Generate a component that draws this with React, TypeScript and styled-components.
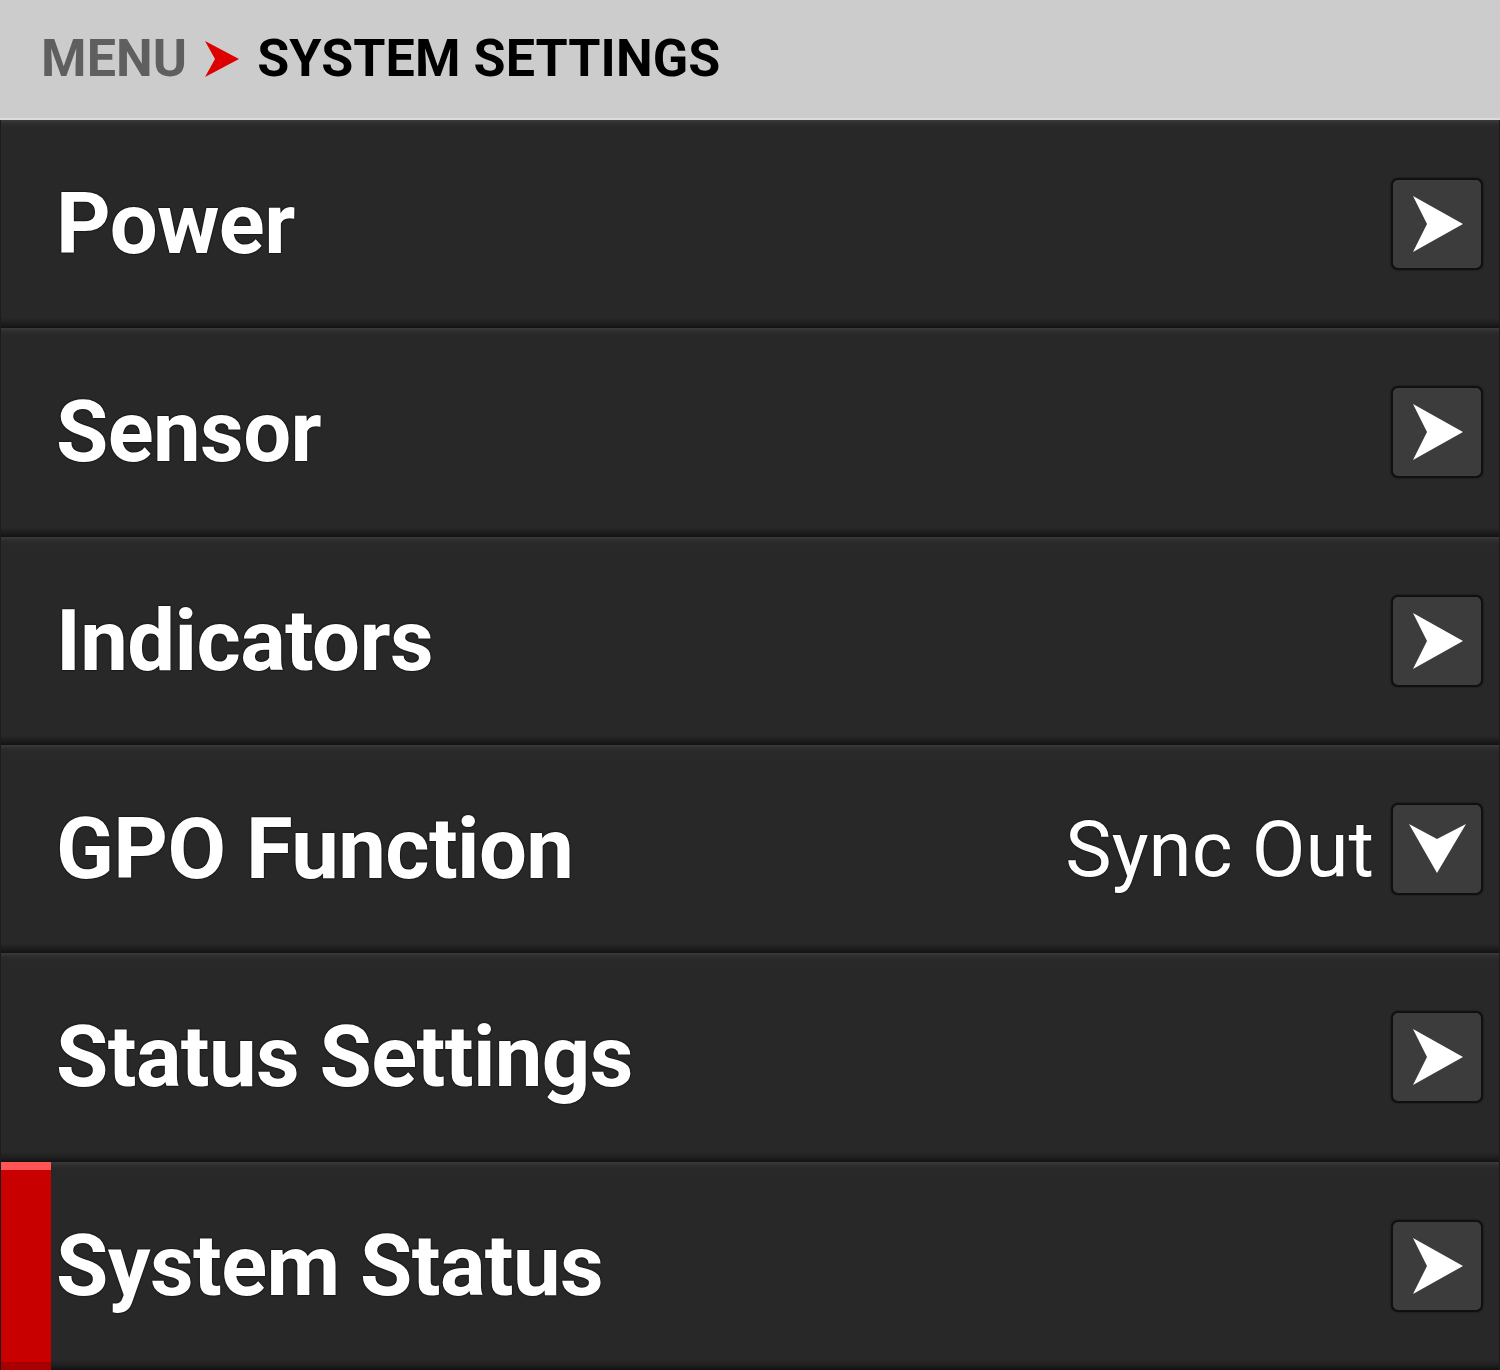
import React, {FC} from 'react'
import styled, {createGlobalStyle} from 'styled-components'

const GlobalStyle = createGlobalStyle`
    html, body {
        margin: 0;
        padding: 0;
        background: #282828;
    }
    body {
        font-family: Roboto, "Liberation Sans", Arial, sans-serif;
    }
`;

const Screen = styled.div`
    display: flex;
    flex-direction: column;
    width: 1500px;
    height: 1370px;
    overflow: hidden;
    background: #1c1c1c;
`;

const Header = styled.div`
    display: flex;
    flex-direction: row;
    align-items: center;
    gap: 18px;
    height: 118px;
    padding-left: 41px;
    background: #cccccc;
    border-bottom: 2px solid #dcdcdc;
    box-sizing: content-box;
`;

const Crumb = styled.span<{ $current?: boolean }>`
    font-size: 52px;
    font-weight: 700;
    line-height: 1;
    letter-spacing: 0.1px;
    color: ${p => p.$current ? '#000000' : '#5f5f5f'};
`;

const MenuList = styled.div`
    display: flex;
    flex-direction: column;
    flex: 1;
`;

const Row = styled.div`
    position: relative;
    flex: 1;
    display: flex;
    flex-direction: row;
    align-items: center;
    padding: 0 16px 0 55px;
    margin: 0 1px;
    background: linear-gradient(to bottom, #3a3a3a 0px, #2c2c2c 4px, #282828 8px, #282828 calc(100% - 10px), #1f1f1f calc(100% - 5px), #121212 100%);
`;

const SelectBar = styled.div`
    position: absolute;
    left: 0;
    top: 0;
    bottom: 0;
    width: 50px;
    background: linear-gradient(to bottom, #ff5555 0px, #ff5555 8px, #c80000 8px, #c80000 calc(100% - 8px), #a80000 calc(100% - 8px));
`;

const Label = styled.span`
    flex: 1;
    position: relative;
    font-size: 85px;
    font-weight: 700;
    color: #ffffff;
    letter-spacing: -0.6px;
    text-shadow: 0 0 2px #000, 0 0 1px #000;
`;

const Value = styled.span`
    font-size: 78px;
    font-weight: 400;
    color: #ffffff;
    margin-right: 17px;
    text-shadow: 0 0 2px #000;
`;

const ArrowButton = styled.div`
    width: 88px;
    height: 88px;
    border: 2px solid #101010;
    border-radius: 7px;
    background: #3c3c3c;
    box-shadow: 0 0 2px rgba(0,0,0,0.6);
    display: flex;
    align-items: center;
    justify-content: center;
`;

type MenuItem = {
    label: string
    value?: string
    selected?: boolean
}

const Items: MenuItem[] = [
    {label: 'Power'},
    {label: 'Sensor'},
    {label: 'Indicators'},
    {label: 'GPO Function', value: 'Sync Out'},
    {label: 'Status Settings'},
    {label: 'System Status', selected: true},
]

const Chevron = () => (
    <svg width="34" height="36" viewBox="0 0 34 36">
        <polygon points="0,0 34,18 0,36 10,18" fill="#dd0000" />
    </svg>
)

const RightArrow = () => (
    <svg width="88" height="88" viewBox="0 0 88 88">
        <polygon points="20,16 70,44 20,72 34,44" fill="#ffffff" />
    </svg>
)

const DownArrow = () => (
    <svg width="88" height="88" viewBox="0 0 88 88">
        <polygon points="16,19 44,34 73,19 44,68" fill="#ffffff" />
    </svg>
)

const MenuRow: FC<{ item: MenuItem }> = ({item}) => {
    return (
        <Row>
            {item.selected && <SelectBar />}
            <Label>{item.label}</Label>
            {item.value && <Value>{item.value}</Value>}
            <ArrowButton>
                {item.value ? <DownArrow /> : <RightArrow />}
            </ArrowButton>
        </Row>
    )
}

export default function App() {
    return (
        <Screen>
            <GlobalStyle />
            <Header>
                <Crumb>MENU</Crumb>
                <Chevron />
                <Crumb $current>SYSTEM SETTINGS</Crumb>
            </Header>
            <MenuList>
                {Items.map((item) => (
                    <MenuRow key={item.label} item={item} />
                ))}
            </MenuList>
        </Screen>
    )
}
